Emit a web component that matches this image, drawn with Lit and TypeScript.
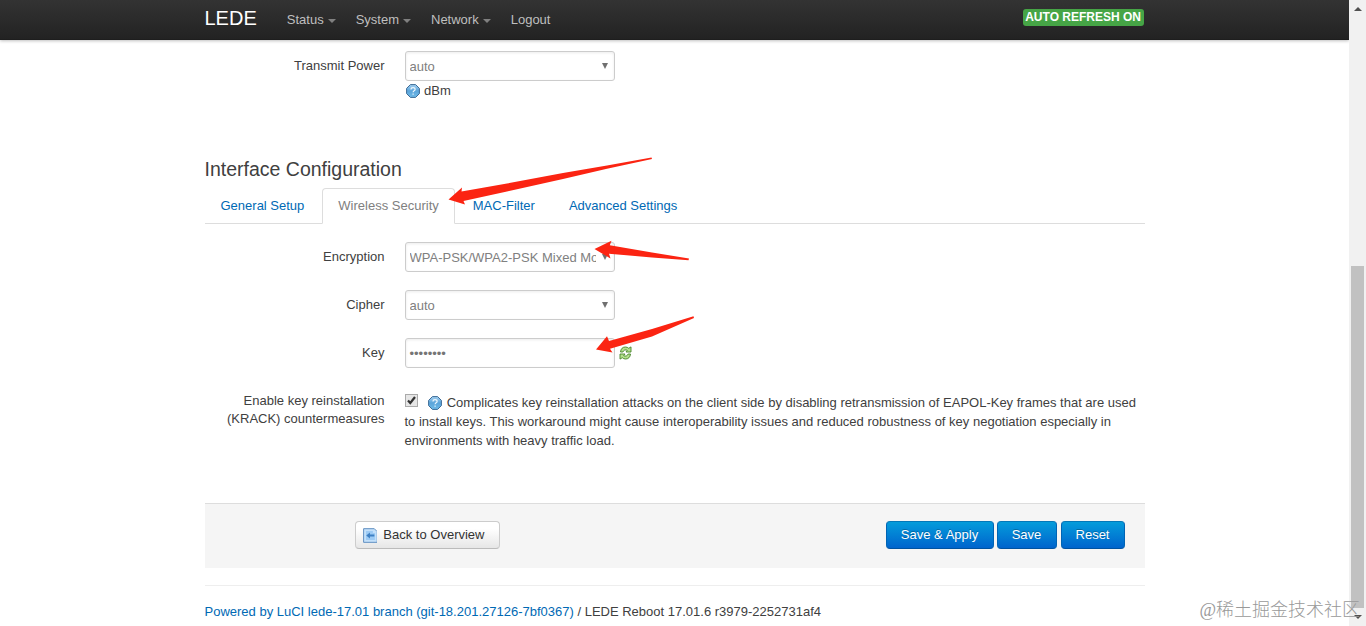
import { LitElement, html, css, svg } from "lit";
import { customElement, property } from "lit/decorators.js";

@customElement("help-icon")
class HelpIcon extends LitElement {
  static styles = css`
    :host { display: inline-block; width: 14px; height: 14px; vertical-align: -3px; }
    svg { display: block; }
  `;
  render() {
    return html`<svg width="14" height="14" viewBox="0 0 14 14">
      <defs><linearGradient id="g" x1="0" y1="0" x2="0" y2="1">
        <stop offset="0" stop-color="#a4d0f0"/><stop offset=".5" stop-color="#5ba4da"/><stop offset="1" stop-color="#6fbbe8"/>
      </linearGradient></defs>
      <path d="M4.4.6h5.2l3.800 3.800v5.200l-3.800 3.800H4.400L.6 9.600V4.400z" fill="url(#g)" stroke="#3c6a96" stroke-width="1"/>
      <path d="M5 5.500c0-2.500 4.100-2.400 4.100-.1 0 1.500-2 1.300-2 2.900M7.100 9.500v1.200" fill="none" stroke="#eef7fd" stroke-width="1.200"/>
    </svg>`;
  }
}

@customElement("select-box")
class SelectBox extends LitElement {
  @property() value = "";
  static styles = css`
    :host { display: flex; box-sizing: border-box; width: 210px; height: 30px; border: 1px solid #ccc; border-radius: 3px;
      background: #fff; box-shadow: inset 0 1px 3px rgba(0,0,0,.08); color: #808080; padding: 1px 5px 0 4px;
      align-items: center; font-size: 13px; line-height: 18px; }
    .value { flex: none; width: 186.5px; overflow: hidden; white-space: nowrap; }
    svg { flex: none; margin: -2px 0 0 5.5px; }
  `;
  render() {
    return html`<span class="value">${this.value}</span>
      <svg width="6" height="6" viewBox="0 0 6 6"><path d="M0 0h6L3 6z" fill="#707070"/></svg>`;
  }
}

@customElement("app-root")
class AppRoot extends LitElement {
  static styles = css`
    :host { display: block; position: relative; width: 1366px; height: 626px; overflow: hidden; background: #fff;
      font: 13px/18px "Liberation Sans", Arial, sans-serif; color: #404040; }
    .window { display: flex; height: 626px; }
    .page { width: 1349px; flex: none; }
    .topbar { height: 40px; background: linear-gradient(#333, #222); box-shadow: 0 1px 3px rgba(0,0,0,.25), inset 0 -1px 0 rgba(0,0,0,.1); }
    .wrap { width: 940px; margin: 0 auto; }
    .bar { display: flex; align-items: flex-start; height: 40px; }
    .brand { color: #fff; font-size: 20px; line-height: 20px; width: 82.3px; padding-top: 8px; }
    .nav { display: flex; padding-top: 11px; color: #bfbfbf; }
    .item { display: flex; align-items: center; margin-right: 20px; line-height: 18px; }
    .caret { margin: 1px 0 0 4px; border: 4px solid transparent; border-top-color: #808080; border-bottom: 0; }
    .badge { margin: 9px 1px 0 auto; height: 17px; box-sizing: border-box; padding: 0 2.5px; border-radius: 3px; background: #46a546;
      color: #fff; font-weight: bold; font-size: 12px; line-height: 16px; }
    .row { display: flex; gap: 20px; margin-bottom: 18px; }
    .label { width: 180px; text-align: right; padding-top: 6px; flex: none; }
    .power { padding-top: 11px; height: 89px; }
    .hint { display: flex; align-items: center; gap: 4.5px; padding: 1px 0 0 1px; }
    .title { margin: 0; font-size: 19.5px; font-weight: normal; line-height: 22px; height: 30px; }
    .tabs { display: flex; height: 36px; box-sizing: border-box; border-bottom: 1px solid #ddd; margin-bottom: 18px; }
    .tab { box-sizing: border-box; height: 36px; padding: 8px 15px 0; border: 1px solid transparent; margin-right: 2px; color: #0069b4; white-space: nowrap; }
    .tab.active { background: #fff; color: #808080; border-color: #ddd #ddd #fff; border-radius: 4px 4px 0 0; }
    .key { display: flex; align-items: center; gap: 4px; }
    .password { box-sizing: border-box; width: 210px; height: 30px; border: 1px solid #ccc; border-radius: 3px; padding: 6px 4px 4px;
      color: #757575; box-shadow: inset 0 1px 3px rgba(0,0,0,.08); }
    .krack { display: block; width: 738px; line-height: 19px; padding-top: 7px; white-space: nowrap; }
    .check { vertical-align: 0; margin-right: 6px; }
    .krack help-icon { margin: 0 1.3px 0 .6px; }
    .actions { display: flex; margin-top: 53px; height: 65px; box-sizing: border-box; padding: 17px 19.5px 0 150px;
      border-top: 1px solid #ddd; background: #f5f5f5; }
    .btn { box-sizing: border-box; height: 28px; border: 1px solid #bbb; border-color: #ccc #ccc #bbb; border-radius: 4px; padding: 4px 14px;
      background: linear-gradient(#fff, #fff 25%, #e6e6e6); color: #333; line-height: 18px; white-space: nowrap; }
    .btn.back { display: flex; align-items: center; gap: 6px; padding: 0 14px 0 7px; margin-right: auto; width: 145px; }
    .btn.primary { color: #fff; background: linear-gradient(#049cdb, #0064cd); border-color: #0478b8 #0064b4 #0052a0;
      text-shadow: 0 -1px 0 rgba(0,0,0,.25); margin-left: 4px; text-align: center; padding: 4px 1px 4px 0; }
    .apply { width: 108px; }
    .save { width: 60px; }
    .btn.primary.save { margin-left: 3px; }
    .reset { width: 64px; }
    .footer { margin-top: 17px; border-top: 1px solid #eee; padding-top: 17px; }
    .link { color: #0069b4; }
    .scroll { width: 17px; flex: none; background: #f1f1f1; display: flex; flex-direction: column; align-items: center; }
    .up { margin-top: 7px; border: 4px solid transparent; border-top: 0; border-bottom-color: #505050; }
    .thumb { margin-top: 255px; width: 13px; height: 342px; background: #c1c1c1; }
    .down { margin-top: 7px; border: 4px solid transparent; border-bottom: 0; border-top-color: #505050; }
    .arrows { position: absolute; left: 0; top: 0; }
    .watermark { position: absolute; right: 6px; bottom: 5px; font: 300 18px/22px "Liberation Serif", "Noto Sans CJK SC", serif;
      color: #999; white-space: nowrap; }
  `;

  private menu(name: string) {
    return html`<span class="item">${name}<i class="caret"></i></span>`;
  }
  private select(label: string, value: string) {
    return html`<div class="row"><span class="label">${label}</span><select-box .value=${value}></select-box></div>`;
  }

  render() {
    return html`
      <div class="window">
        <div class="page">
          <div class="topbar"><div class="wrap bar">
            <span class="brand">LEDE</span>
            <nav class="nav">${["Status", "System", "Network"].map((n) => this.menu(n))}<span class="item">Logout</span></nav>
            <span class="badge">AUTO REFRESH ON</span>
          </div></div>
          <main class="wrap">
            <div class="row power"><span class="label">Transmit Power</span>
              <div><select-box .value=${"auto"}></select-box><div class="hint"><help-icon></help-icon>dBm</div></div>
            </div>
            <h3 class="title">Interface Configuration</h3>
            <div class="tabs">
              <span class="tab">General Setup</span><span class="tab active">Wireless Security</span>
              <span class="tab">MAC-Filter</span><span class="tab">Advanced Settings</span>
            </div>
            ${this.select("Encryption", "WPA-PSK/WPA2-PSK Mixed Mode")}
            ${this.select("Cipher", "auto")}
            <div class="row"><span class="label">Key</span>
              <div class="key"><span class="password">••••••••</span>
                <svg width="13" height="14" viewBox="0 0 13 14"><g fill="#b4e08c" stroke="#47852b" stroke-width=".9" stroke-linejoin="round">
                  <path d="M1.500 6C1.800 2.700 3.800.9 6.500 1 7.800 1 8.900 1.500 9.700 2.300L12 .9V6H7L8.300 4.300C6.700 3.300 4.600 4 3.900 6z"/>
                  <path d="M11.500 8C11.200 11.300 9.200 13.100 6.500 13 5.200 13 4.100 12.500 3.300 11.700L1 13.100V8H6L4.700 9.700C6.300 10.700 8.400 10 9.100 8z"/>
                </g></svg>
              </div>
            </div>
            <div class="row"><span class="label">Enable key reinstallation (KRACK) countermeasures</span>
              <div class="krack"><svg class="check" width="13" height="13" viewBox="0 0 13 13">
                  <rect x=".5" y=".5" width="12" height="12" fill="#e6e6e6" stroke="#aaa"/>
                  <path d="M3 6.500L5.300 9 10 3" fill="none" stroke="#333" stroke-width="2.200"/></svg>
                <help-icon></help-icon> Complicates key reinstallation attacks on the client side by disabling retransmission of EAPOL-Key frames that are used<br>to install keys. This workaround might cause interoperability issues and reduced robustness of key negotiation especially in<br>environments with heavy traffic load.
              </div>
            </div>
            <div class="actions">
              <span class="btn back"><svg width="15" height="15" viewBox="0 0 15 15">
                <path d="M.6.6h10.800l3 3v10.800H.6z" fill="#c3e0fa" stroke="#5f8fc0"/>
                <path d="M3 3h7v2h2v7H3z" fill="#9dcbf5"/>
                <path d="M3.300 7.500L7 4.500v2h4.500v2H7v2z" fill="#3d80c4"/></svg>Back to Overview</span>
              <span class="btn primary apply">Save &amp; Apply</span>
              <span class="btn primary save">Save</span>
              <span class="btn primary reset">Reset</span>
            </div>
            <footer class="footer"><span class="link">Powered by LuCI lede-17.01 branch (git-18.201.27126-7bf0367)</span> / LEDE Reboot 17.01.6 r3979-2252731af4</footer>
          </main>
        </div>
        <div class="scroll"><i class="up"></i><i class="thumb"></i><i class="down"></i></div>
      </div>
      <svg class="arrows" width="1366" height="626" viewBox="0 0 1366 626">
        ${["M651.500 157.500L652 159 607 168.800 563 179 507 191.500 463.500 201 465 204.500 448.500 199.500 462 187.500 461.500 191.500 507 183.500 563 173 607 165.500z",
          "M689 258.500L688.500 260.300 652 257.500 609 253.700 610.500 258.500 594.500 249 611.500 240.700 609.800 245.300 652 252.500z",
          "M693.500 316.300L694 318 652 336.500 610 348.800 612.500 352.500 596 349.500 607 336.300 609 341 652 329z"]
          .map((d) => svg`<path d=${d} fill="#fb2412"/>`)}
      </svg>
      <div class="watermark">@稀土掘金技术社区</div>`;
  }
}
